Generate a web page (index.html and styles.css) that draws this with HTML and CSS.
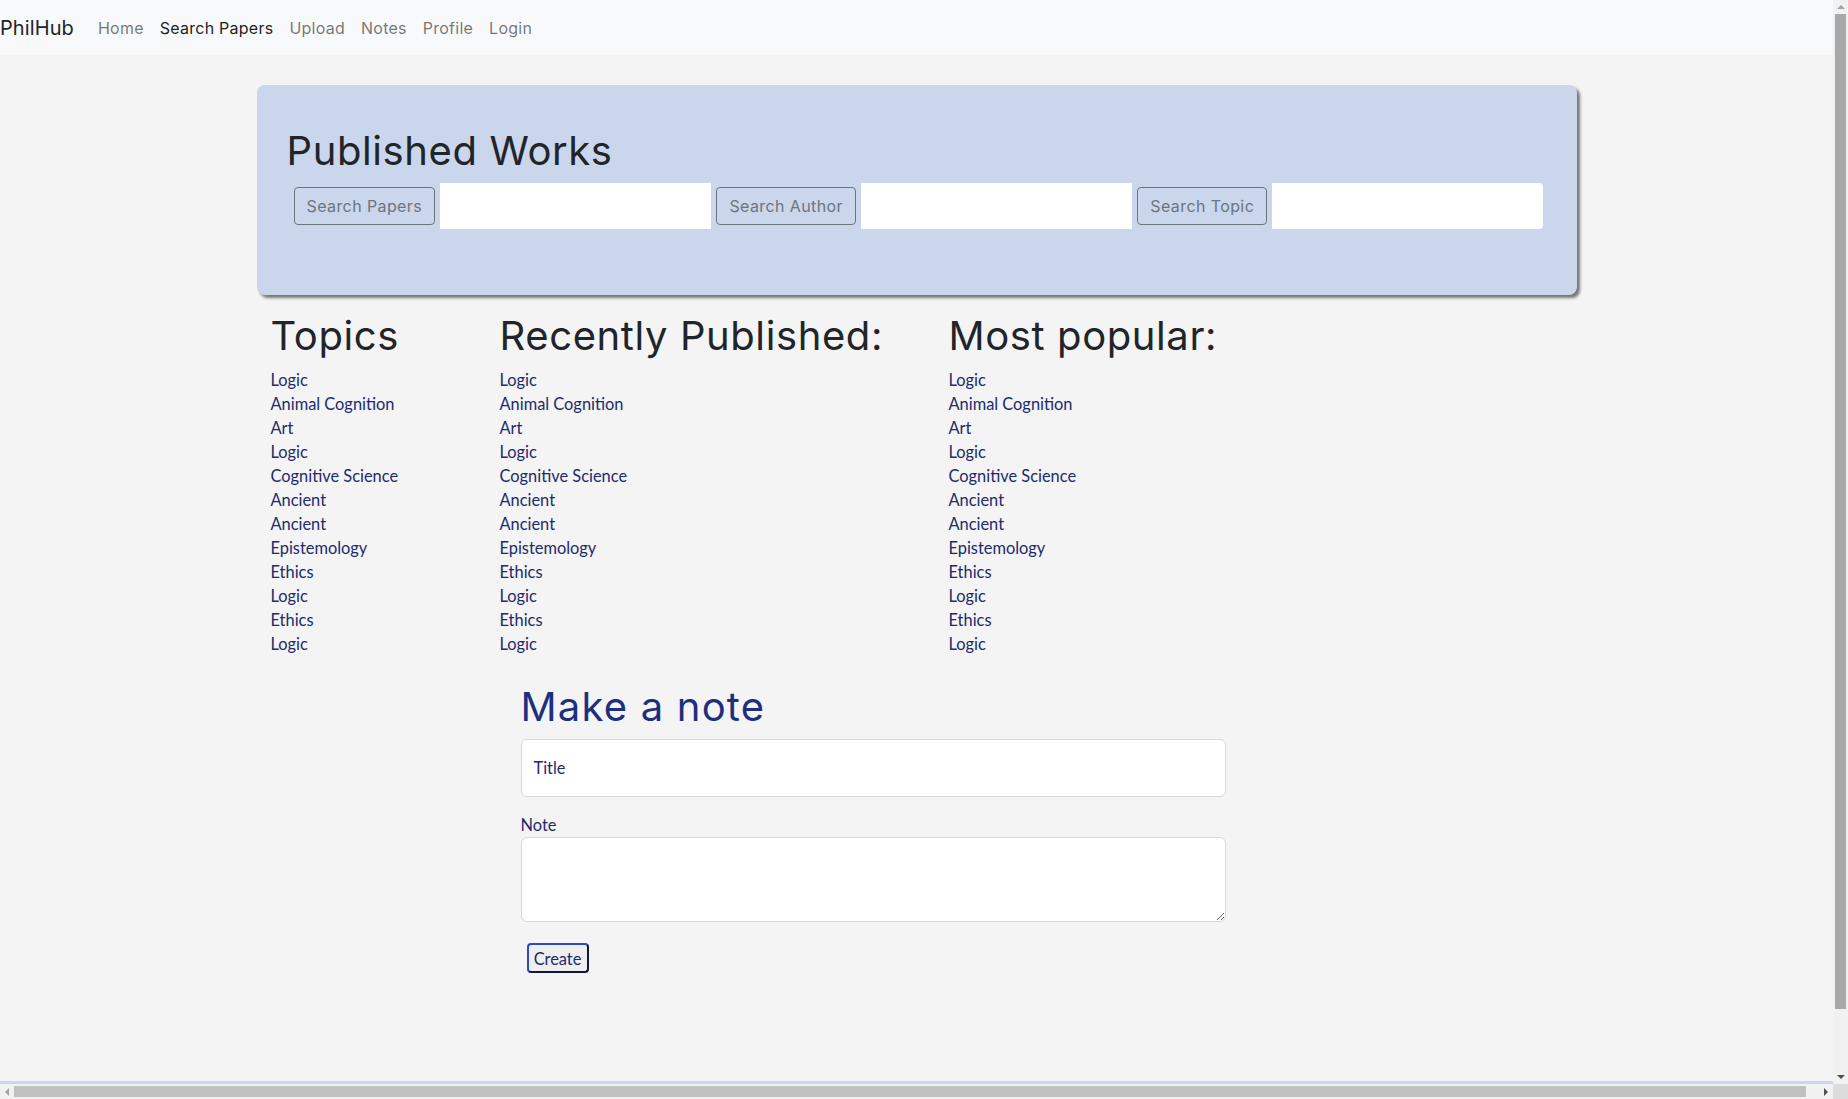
FILE: index.html
```html
<!DOCTYPE html>
<html lang="en">
<head>
<meta charset="utf-8">
<title>PhilHub</title>
<link rel="stylesheet" href="styles.css">
</head>
<body>
<nav class="navbar">
  <a class="brand" href="#">PhilHub</a>
  <ul class="nav-links">
    <li><a class="nav-link" href="#">Home</a></li>
    <li><a class="nav-link active" href="#">Search Papers</a></li>
    <li><a class="nav-link" href="#">Upload</a></li>
    <li><a class="nav-link" href="#">Notes</a></li>
    <li><a class="nav-link" href="#">Profile</a></li>
    <li><a class="nav-link" href="#">Login</a></li>
  </ul>
</nav>

<main class="container">
  <section class="hero">
    <h1 class="display">Published Works</h1>
    <form class="search-row">
      <button type="button" class="btn-outline">Search Papers</button>
      <input class="search-input" type="text">
      <button type="button" class="btn-outline">Search Author</button>
      <input class="search-input" type="text">
      <button type="button" class="btn-outline">Search Topic</button>
      <input class="search-input last" type="text">
    </form>
  </section>

  <div class="columns">
    <div class="col">
      <h1 class="display">Topics</h1>
      <ul class="topic-list">
        <li><a href="#">Logic</a></li>
        <li><a href="#">Animal Cognition</a></li>
        <li><a href="#">Art</a></li>
        <li><a href="#">Logic</a></li>
        <li><a href="#">Cognitive Science</a></li>
        <li><a href="#">Ancient</a></li>
        <li><a href="#">Ancient</a></li>
        <li><a href="#">Epistemology</a></li>
        <li><a href="#">Ethics</a></li>
        <li><a href="#">Logic</a></li>
        <li><a href="#">Ethics</a></li>
        <li><a href="#">Logic</a></li>
      </ul>
    </div>
    <div class="col">
      <h1 class="display">Recently Published:</h1>
      <ul class="topic-list">
        <li><a href="#">Logic</a></li>
        <li><a href="#">Animal Cognition</a></li>
        <li><a href="#">Art</a></li>
        <li><a href="#">Logic</a></li>
        <li><a href="#">Cognitive Science</a></li>
        <li><a href="#">Ancient</a></li>
        <li><a href="#">Ancient</a></li>
        <li><a href="#">Epistemology</a></li>
        <li><a href="#">Ethics</a></li>
        <li><a href="#">Logic</a></li>
        <li><a href="#">Ethics</a></li>
        <li><a href="#">Logic</a></li>
      </ul>
    </div>
    <div class="col">
      <h1 class="display">Most popular:</h1>
      <ul class="topic-list">
        <li><a href="#">Logic</a></li>
        <li><a href="#">Animal Cognition</a></li>
        <li><a href="#">Art</a></li>
        <li><a href="#">Logic</a></li>
        <li><a href="#">Cognitive Science</a></li>
        <li><a href="#">Ancient</a></li>
        <li><a href="#">Ancient</a></li>
        <li><a href="#">Epistemology</a></li>
        <li><a href="#">Ethics</a></li>
        <li><a href="#">Logic</a></li>
        <li><a href="#">Ethics</a></li>
        <li><a href="#">Logic</a></li>
      </ul>
    </div>
  </div>

  <section class="note">
    <h1 class="display note-title">Make a note</h1>
    <form class="note-form">
      <div class="floating">
        <input class="field title-field" type="text" id="title">
        <label class="float-label" for="title">Title</label>
      </div>
      <label class="field-label" for="note">Note</label>
      <textarea class="field note-field" id="note"></textarea>
      <button type="button" class="btn-create">Create</button>
    </form>
  </section>
</main>

<footer class="footer"></footer>

<div class="scrollbar-v" aria-hidden="true">
  <span class="sb-btn"><span class="tri tri-up"></span></span>
  <span class="sb-track-v"><span class="sb-thumb-v"></span></span>
  <span class="sb-btn"><span class="tri tri-down"></span></span>
</div>
<div class="scrollbar-h" aria-hidden="true">
  <span class="sb-btn-h"><span class="tri tri-left"></span></span>
  <span class="sb-track-h"><span class="sb-thumb-h"></span></span>
  <span class="sb-btn-h"><span class="tri tri-right"></span></span>
</div>
<div class="scrollbar-corner" aria-hidden="true"></div>
</body>
</html>
```
FILE: styles.css
```css
* {
  box-sizing: border-box;
}

html, body {
  margin: 0;
  padding: 0;
}

body {
  background: #f4f4f4;
  font-family: "Lato", "Liberation Sans", sans-serif;
  font-size: 16.4px;
  line-height: 24px;
  color: #212529;
  padding-right: 15px;
  overflow: hidden;
}

a {
  text-decoration: none;
}

/* Navbar */
.navbar {
  display: flex;
  align-items: center;
  height: 55px;
  background: #f8f9fa;
  font-family: "Inter", sans-serif;
}

.brand {
  font-size: 20px;
  letter-spacing: 0.1px;
  color: #212529;
  margin-right: 16px;
  line-height: 30px;
}

.nav-links {
  display: flex;
  list-style: none;
  margin: 0;
  padding: 0;
}

.nav-link {
  display: block;
  padding: 8px;
  font-size: 16px;
  letter-spacing: 0.25px;
  color: rgba(0, 0, 0, 0.55);
}

.nav-link.active {
  color: rgba(0, 0, 0, 0.9);
}

/* Container */
.container {
  width: 1320px;
  margin: 0 auto;
}

.display {
  font-family: "Inter", sans-serif;
  font-weight: 400;
  font-size: 40px;
  line-height: 48px;
  letter-spacing: 0.6px;
  margin: 0 0 8px;
  color: #212529;
}

/* Hero */
.hero {
  margin-top: 30px;
  background: #c9d6ec;
  border-radius: 8px;
  box-shadow: 3px 3px 3px #777;
  height: 210px;
  padding: 42px 33px 0 30px;
}

.search-row {
  display: flex;
  align-items: center;
  gap: 5px;
  margin-left: 7px;
  height: 46px;
}

.btn-outline {
  flex: none;
  height: 38px;
  padding: 0 12px;
  background: transparent;
  border: 1px solid #6c757d;
  border-radius: 4px;
  color: #6c757d;
  font-family: "Inter", sans-serif;
  font-size: 16px;
  letter-spacing: 0.4px;
}

.search-input {
  flex: 1;
  min-width: 0;
  height: 46px;
  border: none;
  background: #fff;
  border-radius: 0;
}

.search-input.last {
  border-radius: 0 4px 4px 0;
}

/* Columns */
.columns {
  display: grid;
  grid-template-columns: 229px 449px 1fr;
  margin-top: 17px;
  padding-left: 14px;
}

.topic-list {
  list-style: none;
  margin: 0;
  padding: 0;
}

.topic-list a {
  color: #1c2a6e;
}

/* Note */
.note {
  margin-top: 27px;
  margin-left: 264px;
  width: 705px;
}

.note-title {
  color: #1e2f7d;
  letter-spacing: 1.2px;
}

.note-form {
  display: flex;
  flex-direction: column;
  align-items: flex-start;
}

.floating {
  position: relative;
  width: 100%;
}

.field {
  display: block;
  width: 100%;
  background: #fff;
  border: 1px solid #d6d8dc;
  border-radius: 6px;
  font-family: inherit;
}

.title-field {
  height: 58px;
}

.float-label {
  position: absolute;
  left: 13px;
  top: 17px;
  color: #1c2a6e;
  pointer-events: none;
}

.field-label {
  margin-top: 16px;
  color: #1c2a6e;
  line-height: 24px;
}

.note-field {
  height: 85px;
  resize: vertical;
}

.btn-create {
  margin-top: 21px;
  margin-left: 6px;
  height: 30px;
  width: 62px;
  padding: 0;
  background: #efefef;
  border: 2px solid #10183a;
  border-top-color: #2d4cc4;
  border-left-color: #2d4cc4;
  border-radius: 4px;
  color: #1c2a6e;
  font-family: "Lato", sans-serif;
  font-size: 16.4px;
}

/* Footer */
.footer {
  margin-top: 108px;
  height: 70px;
  background: #c9d6ec;
}

/* Window scrollbars (drawn over the page edge) */
.scrollbar-v {
  position: fixed;
  top: 0;
  right: 0;
  width: 15px;
  height: calc(100% - 15px);
  background: #f1f1f1;
  display: flex;
  flex-direction: column;
}

.sb-btn {
  flex: none;
  height: 14px;
  display: flex;
  align-items: center;
  justify-content: center;
}

.sb-track-v {
  flex: 1;
  padding: 0 2px;
}

.sb-thumb-v {
  display: block;
  height: 995px;
  background: #a8a8a8;
}

.scrollbar-h {
  position: fixed;
  left: 0;
  bottom: 0;
  width: calc(100% - 15px);
  height: 15px;
  background: #f1f1f1;
  display: flex;
}

.sb-btn-h {
  flex: none;
  width: 14px;
  display: flex;
  align-items: center;
  justify-content: center;
}

.sb-track-h {
  flex: 1;
  padding: 2px 0;
}

.sb-thumb-h {
  display: block;
  height: 100%;
  width: 1792px;
  background: #c1c1c1;
}

.scrollbar-corner {
  position: fixed;
  right: 0;
  bottom: 0;
  width: 15px;
  height: 15px;
  background: #dcdcdc;
}

.tri {
  width: 0;
  height: 0;
  border-style: solid;
}

.tri-up {
  border-width: 0 4px 4px 4px;
  border-color: transparent transparent #a3a3a3 transparent;
}

.tri-down {
  border-width: 4px 4px 0 4px;
  border-color: #505050 transparent transparent transparent;
}

.tri-left {
  border-width: 4px 4px 4px 0;
  border-color: transparent #a3a3a3 transparent transparent;
}

.tri-right {
  border-width: 4px 0 4px 4px;
  border-color: transparent transparent transparent #505050;
}
```
